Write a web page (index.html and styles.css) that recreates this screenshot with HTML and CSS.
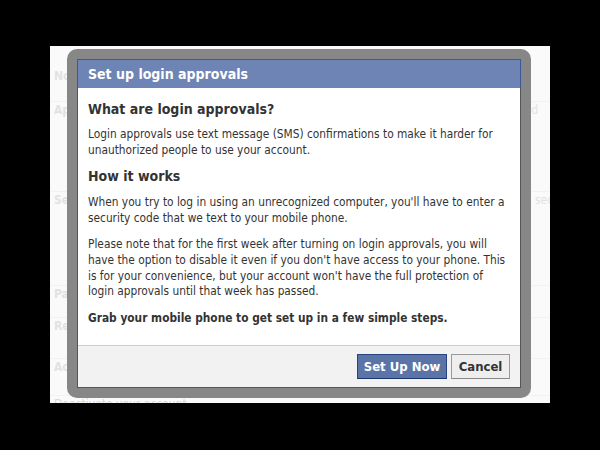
FILE: index.html
```html
<!DOCTYPE html>
<html lang="en">
<head>
  <meta charset="UTF-8" />
  <title>Set up login approvals</title>
  <link rel="stylesheet" href="styles.css">
</head>
<body>

<div class="page">
  <!-- settings page behind the dialog -->
  <div class="page-row row-1"><span>Notifications</span></div>
  <div class="page-row row-2"><span>App passwords</span><span class="right">Edited</span></div>
  <div class="page-row row-3"><span>Security Question</span><span class="far">security</span></div>
  <div class="page-row row-4"><span>Passwords</span></div>
  <div class="page-row row-5"><span>Recognized devices</span></div>
  <div class="page-row row-6"><span>Active Sessions</span></div>
  <div class="page-foot">Deactivate your account.</div>

  <div class="dialog">
    <div class="dialog-inner">
      <h2 class="dialog-title">Set up login approvals</h2>
      <div class="dialog-body">
        <h3>What are login approvals?</h3>
        <p>Login approvals use text message (SMS) confirmations to make it harder for unauthorized people to use your account.</p>
        <h3>How it works</h3>
        <p>When you try to log in using an unrecognized computer, you'll have to enter a security code that we text to your mobile phone.</p>
        <p>Please note that for the first week after turning on login approvals, you will have the option to disable it even if you don't have access to your phone. This is for your convenience, but your account won't have the full protection of login approvals until that week has passed.</p>
        <p class="strong">Grab your mobile phone to get set up in a few simple steps.</p>
      </div>
      <div class="dialog-footer">
        <button class="btn btn-primary">Set Up Now</button>
        <button class="btn btn-cancel">Cancel</button>
      </div>
    </div>
  </div>
</div>

</body>
</html>
```

FILE: styles.css
```css
* {
  box-sizing: border-box;
}
body {
  margin: 0;
  background: #000;
  font-family: 'DejaVu Sans Condensed', 'DejaVu Sans', Verdana, sans-serif;
  color: #333;
  width: 600px;
  height: 450px;
  overflow: hidden;
}
.page {
  position: relative;
  margin: 46px 0 0 50px;
  width: 500px;
  height: 357px;
  overflow: hidden;
  background: #fafafa;
  padding-top: 22px;
}
.page-row {
  display: flex;
  justify-content: space-between;
  padding: 0 12px 0 4px;
  font-size: 12px;
  line-height: 16px;
  font-weight: bold;
  color: #e2e2e2;
  border-bottom: 1px solid #f2f2f2;
}
.page-row .right,
.page-row .far {
  font-weight: normal;
}
.page-row .far {
  margin-right: -40px;
}
.row-1 { height: 34px; }
.row-2 { height: 90px; }
.row-3 { height: 94px; }
.row-4 { height: 32px; }
.row-5 { height: 41px; }
.row-6 { height: 37px; }
.page-foot {
  padding-left: 4px;
  font-size: 12px;
  line-height: 16px;
  color: #d8d8d8;
}

/* dialog sits over the page */
.dialog {
  position: absolute;
  left: 17px;
  top: 3px;
  width: 464px;
  padding: 10px;
  background: #878787;
  border-radius: 10px;
}
.dialog-inner {
  background: #fff;
  border: 1px solid #555;
  border-top: none;
}
.dialog-title {
  height: 29px;
  margin: 0 -1px;
  padding: 6px 10px 0;
  background: #6d84b4;
  border: 1px solid #3b5998;
  border-bottom: none;
  color: #fff;
  font-size: 14px;
  line-height: 17px;
  font-weight: bold;
}
.dialog-body {
  padding: 12px 8px 19px 10px;
  font-size: 11.8px;
  line-height: 15.6px;
}
.dialog-body h3 {
  margin: 0 0 9px;
  font-size: 14px;
  line-height: 18px;
}
.dialog-body p + h3 {
  margin-top: -2px;
  margin-bottom: 10px;
}
.dialog-body p {
  margin: 0 0 11px;
}
.dialog-body p.strong {
  font-weight: bold;
  margin: 0;
}
.dialog-footer {
  display: flex;
  justify-content: flex-end;
  gap: 4px;
  padding: 8px 10px 8px;
  background: #f2f2f2;
  border-top: 1px solid #ccc;
}
.btn {
  height: 25px;
  padding: 0;
  font-family: inherit;
  font-size: 13px;
  font-weight: bold;
  white-space: nowrap;
  color: #333;
  background: #eee;
  border: 1px solid #999;
  border-bottom-color: #888;
}
.btn-primary {
  width: 90px;
  color: #fff;
  background: #5b74a8;
  border-color: #29447e #29447e #1a356e;
}
.btn-cancel {
  width: 59px;
}
```
